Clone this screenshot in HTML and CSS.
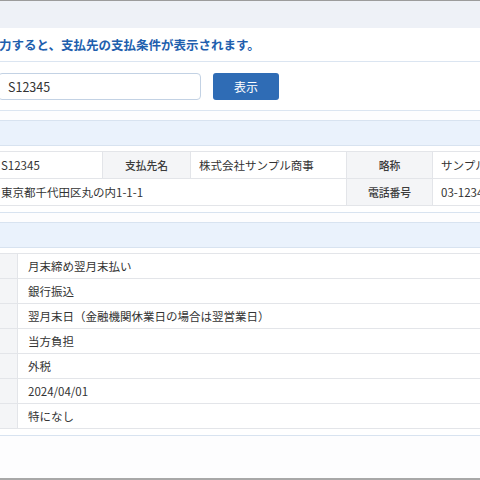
FILE: index.html
```html
<!DOCTYPE html>
<html lang="ja">
  <head>
    <meta charset="UTF-8" />
    <link rel="stylesheet" href="styles.css">
  </head>
  <body>
    <div class="frame">
      <div class="page">
        <div class="titleBar"></div>

        <div class="searchCard">
          <div class="guide">支払先コードを入力すると、支払先の支払条件が表示されます。</div>
          <div class="searchRow">
            <label class="searchLabel" for="code">支払先コード</label>
            <input type="text" id="code" class="codeInput" value="S12345" autocomplete="off">
            <button class="showButton">表示</button>
          </div>
        </div>

        <div class="section">
          <div class="sectionHead">支払先情報</div>
          <div class="sectionBody">
            <table class="infoTable">
              <colgroup>
                <col style="width: 102px">
                <col style="width: 110px">
                <col style="width: 88px">
                <col style="width: 156px">
                <col style="width: 86px">
                <col style="width: 150px">
              </colgroup>
              <tr>
                <th>支払先コード</th>
                <td>S12345</td>
                <th>支払先名</th>
                <td>株式会社サンプル商事</td>
                <th>略称</th>
                <td>サンプル商事</td>
              </tr>
              <tr>
                <th>所在地</th>
                <td colspan="3">東京都千代田区丸の内1-1-1</td>
                <th>電話番号</th>
                <td>03-1234-5678</td>
              </tr>
            </table>
          </div>
        </div>

        <div class="section">
          <div class="sectionHead">支払条件</div>
          <div class="sectionBody">
            <table class="termTable">
              <colgroup>
                <col style="width: 127px">
                <col>
              </colgroup>
              <tr><th>支払条件</th><td>月末締め翌月末払い</td></tr>
              <tr><th>支払方法</th><td>銀行振込</td></tr>
              <tr><th>支払日</th><td>翌月末日（金融機関休業日の場合は翌営業日）</td></tr>
              <tr><th>振込手数料</th><td>当方負担</td></tr>
              <tr><th>消費税区分</th><td>外税</td></tr>
              <tr><th>適用開始日</th><td>2024/04/01</td></tr>
              <tr><th>備考</th><td>特になし</td></tr>
            </table>
          </div>
        </div>
      </div>
    </div>
  </body>
</html>
```

FILE: styles.css
```css
html, body {
  margin: 0;
  padding: 0;
}

body {
  overflow: hidden;
  background-color: #ffffff;
  font-family: "Noto Sans CJK JP", "Noto Sans", sans-serif;
  color: #333333;
}

.frame {
  height: 480px;
  box-sizing: border-box;
  border-top: 1px solid #9c9c9c;
  border-bottom: 2px solid #a8a8a8;
  background-color: #fdfdfe;
  overflow: hidden;
}

/* the page is wider than the window: its left part is cut off */
.page {
  width: 780px;
  margin-left: -120px;
}

.titleBar {
  height: 27px;
  background-color: #eef1f7;
}

.searchCard {
  background-color: #ffffff;
  border-bottom: 1px solid #dbe5f1;
}

.guide {
  height: 33px;
  line-height: 33px;
  padding-left: 19px;
  font-size: 12.5px;
  font-weight: 700;
  color: #1f5fae;
  border-bottom: 1px solid #dbe5f1;
  white-space: nowrap;
}

.searchRow {
  height: 48px;
  display: flex;
  align-items: center;
  padding-left: 14px;
}

.searchLabel {
  width: 104px;
  font-size: 12px;
  color: #444444;
}

.codeInput {
  width: 203px;
  height: 27px;
  box-sizing: border-box;
  border: 1px solid #c3d2e4;
  border-radius: 4px;
  padding: 0 9px;
  font-family: "Noto Sans CJK JP", "Noto Sans", sans-serif;
  font-size: 12.5px;
  color: #333333;
  background-color: #ffffff;
}

.showButton {
  width: 66px;
  height: 27px;
  margin-left: 12px;
  border: none;
  border-radius: 3px;
  background-color: #2f6cb5;
  color: #ffffff;
  font-family: "Noto Sans CJK JP", "Noto Sans", sans-serif;
  font-size: 12px;
  cursor: pointer;
}

.section {
  margin-top: 9px;
  background-color: #ffffff;
  border-top: 1px solid #d8e3f0;
  border-bottom: 1px solid #d8e3f0;
}

.sectionHead {
  height: 24px;
  line-height: 24px;
  padding-left: 14px;
  background-color: #eaf2fc;
  border-bottom: 1px solid #d8e3f0;
  font-size: 12px;
  font-weight: 700;
  color: #1f5fae;
}

.sectionBody {
  padding: 5px 10px 6px;
}

table {
  border-collapse: collapse;
  table-layout: fixed;
  font-size: 11.5px;
}

.infoTable {
  width: 692px;
}

.termTable {
  width: 760px;
}

th, td {
  border: 1px solid #e3e5e9;
  white-space: nowrap;
  overflow: hidden;
  text-align: left;
}

th {
  background-color: #f4f5f7;
  font-weight: 500;
  color: #3c3c3c;
  text-align: center;
  font-size: 10.8px;
}

.infoTable th, .infoTable td {
  height: 27px;
  box-sizing: border-box;
  padding: 0 8px;
  line-height: 16px;
}

.termTable th, .termTable td {
  height: 25px;
  box-sizing: border-box;
  padding: 0 10px;
  line-height: 16px;
}
```
